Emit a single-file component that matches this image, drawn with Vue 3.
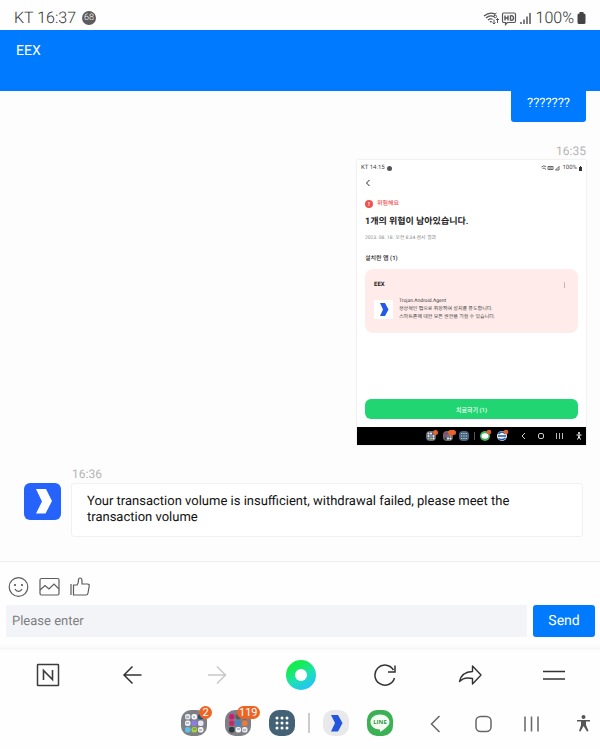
<script setup>
import { ref } from 'vue';

const message = ref('');

const folders = [
  {
    name: 'Apps folder',
    badge: '2',
    dots: ['#dfe6ee', '#f4f4f4', '#24507a', '#eef0f5', '#8d7bea', '#e8e8f4', '#5cc0ea', '#a4d43a', '#f2f2f2']
  },
  {
    name: 'Shopping folder',
    badge: '119',
    dots: ['#d81b72', '#5a5f66', '#4a5a68', '#d4286c', '#3f86cf', '#ee7a34', '#2c3a44', '#f4f4f4', '#e9e9ee']
  }
];

const dotX = (i) => 4 + (i % 3) * 6.5;
const dotY = (i) => 4 + Math.floor(i / 3) * 6.5;

const send = () => {
  message.value = '';
};
</script>

<template>
  <div class="screen">
    <div class="status-bar">
      <div class="status-group">
        <span>KT 16:37</span>
        <span class="status-count">68</span>
      </div>
      <div class="status-group status-right">
        <svg width="50" height="16" viewBox="0 0 50 16" fill="none" stroke="#555">
          <path d="M1 6 Q6.500 1.500 12 4 M3 8 Q7 4.500 11 6.800 M5 10 Q7.500 8 9.500 9.300" stroke-width="1.300" />
          <path d="M6.500 11 L8 13 L9 11 Z" fill="#555" stroke="none" />
          <path d="M13.500 3 Q11 4 11 6.500 M11 6.500 a1.300 1.300 0 1 0 2.600 0 a1.300 1.300 0 1 0 -2.600 0" />
          <path d="M11 9.500 V14 M9.500 12.500 L11 14 L12.500 12.500 M14.500 13 V8.500 M13 10 L14.500 8.500 L16 10" />
          <path d="M20.500 3 H31 Q32.500 3 32.500 4.500 V11 Q32.500 12.500 31 12.500 H24.500 L22.500 14.500 V12.500 H20.500 Q19.500 12.500 19.500 11 V4.500 Q19.500 3 20.500 3 Z" stroke-width="1.200" />
          <path d="M22 5.500 V10.500 M25 5.500 V10.500 M22 8 H25 M27.500 5.500 V10.500 M27.500 5.600 H28.500 Q30.500 5.800 30.500 8 Q30.500 10.300 28.500 10.400 H27.500" stroke-width="1.400" />
          <path d="M38 12 V14 M41 9.500 V14 M44 6.500 V14 M47 3 V14" stroke-width="1.500" />
        </svg>
        <span>100%</span>
        <svg width="9" height="14" viewBox="0 0 9 14">
          <path d="M2.500 1 H6.500 V2.500 H7 Q8.500 2.500 8.500 4 V11.500 Q8.500 13 7 13 H2 Q0.500 13 0.500 11.500 V4 Q0.500 2.500 2 2.500 H2.500 Z" fill="#444" />
        </svg>
      </div>
    </div>

    <header class="header">EEX</header>

    <main class="chat">
      <div class="sent-bubble">???????</div>
      <time class="time time-sent">16:35</time>

      <section class="shot">
        <div class="shot-status">
          <span class="shot-carrier">KT 14:15 <i class="shot-count"></i></span>
          <span class="shot-carrier">
            <svg width="19" height="6" viewBox="0 0 19 6" fill="none" stroke="#666">
              <path d="M0.500 2 Q2.500 0 5 1.500 M1.500 3.500 Q3 2 5 4.500 M7 1.500 H12 V4.500 H7 Z M8 3 H11 M14.500 5 L18 1.500 V5 Z" />
            </svg>
            100%
            <svg width="3" height="5" viewBox="0 0 3 5"><path d="M1 0 H2 V1 H3 V5 H0 V1 H1 Z" fill="#333" /></svg>
          </span>
        </div>
        <div class="shot-body">
          <svg class="shot-back" width="6" height="8" viewBox="0 0 6 8" fill="none" stroke="#222">
            <path d="M4.500 1 L1.500 4 L4.500 7" />
          </svg>
          <div class="risk">
            <svg width="8" height="8" viewBox="0 0 8 8">
              <circle cx="4" cy="4" r="4" fill="#ef5350" />
              <path d="M4 2 V4.500 M4 5.300 V6" stroke="#fff" />
            </svg>
            위험해요
          </div>
          <h2 class="shot-title">1개의 위협이 남아있습니다.</h2>
          <p class="shot-date">2023. 08. 18. 오전 8:34 검사 결과</p>
          <h3 class="shot-section">설치한 앱 (1)</h3>
          <div class="threat">
            <div class="threat-head">
              <span>EEX</span>
              <svg width="3" height="6" viewBox="0 0 3 6" fill="#777">
                <circle cx="1.500" cy="1" r="0.600" /><circle cx="1.500" cy="3" r="0.600" /><circle cx="1.500" cy="5" r="0.600" />
              </svg>
            </div>
            <div class="threat-row">
              <svg width="19" height="19" viewBox="0 0 19 19">
                <rect width="19" height="19" fill="#fff" />
                <path d="M6 3 H11 L14.500 9.500 L11 16 H6 L9 9.500 Z" fill="#2759e8" />
              </svg>
              <p class="threat-text">Trojan.Android.Agent<br />정상적인 앱으로 위장하여 설치를 유도합니다.<br />스마트폰에 대한 모든 권한을 가질 수 있습니다.</p>
            </div>
          </div>
          <button class="heal-button" type="button">치료하기 (1)</button>
        </div>
        <svg class="shot-nav" viewBox="0 0 229 18" fill="none">
          <rect width="229" height="18" fill="#000" />
          <g v-for="(folder, f) in folders" :key="folder.name">
            <rect :x="69 + f * 17" y="4" width="10" height="10" rx="4" fill="#666a72" />
            <circle
              v-for="(dot, i) in folder.dots"
              :key="i"
              :cx="71.5 + f * 17 + (i % 3) * 2.5"
              :cy="6.5 + Math.floor(i / 3) * 2.5"
              r="1"
              :fill="dot"
            />
          </g>
          <rect x="76" y="3" width="5" height="5" rx="2.500" fill="#e8632c" />
          <rect x="91" y="3" width="8" height="5" rx="2.500" fill="#e8632c" />
          <rect x="102" y="4" width="10" height="10" rx="4" fill="#48657b" />
          <path d="M104 6.500 H110 M104 9 H110 M104 11.500 H110" stroke="#b9cbd8" stroke-dasharray="1.300 1" />
          <path d="M117.500 5 V13" stroke="#555" />
          <circle cx="128" cy="9" r="5" fill="#45b45c" />
          <ellipse cx="128" cy="9" rx="3.500" ry="2.700" fill="#fff" />
          <circle cx="145" cy="9" r="5" fill="#f2f5fa" />
          <path d="M141.500 7 Q145 3 148.500 7 M141 9 H149 M141.500 11.500 Q145 14 148.500 11" stroke="#2257a8" stroke-width="1.500" />
          <circle cx="132" cy="5" r="2.300" fill="#e8632c" />
          <circle cx="149" cy="5" r="2.300" fill="#e8632c" />
          <path d="M168 6 L165 9 L168 12" stroke="#ccc" />
          <rect x="181.500" y="6.500" width="5" height="5" rx="1.500" stroke="#ccc" />
          <path d="M199.500 6 V12 M202.500 6 V12 M205.500 6 V12" stroke="#bbb" />
          <circle cx="222" cy="6" r="1" fill="#fff" />
          <path d="M219.500 8 H224.500 M222 8 V10 M222 9.500 L220.500 12.500 M222 9.500 L223.500 12.500" stroke="#fff" />
        </svg>
      </section>

      <time class="time time-received">16:36</time>
      <div class="received">
        <svg class="avatar" width="37" height="37" viewBox="0 0 37 37">
          <rect width="37" height="37" rx="6" fill="#2563fb" />
          <path d="M12 6 H22 L28 18 L21.500 30.500 H12 L18 18.500 Z" fill="#fff" />
        </svg>
        <p class="received-bubble">Your transaction volume is insufficient, withdrawal failed, please meet the transaction volume</p>
      </div>
    </main>

    <form class="composer" @submit.prevent="send">
      <div class="tools">
        <button type="button" class="icon-button" aria-label="Emoji">
          <svg width="21" height="20" viewBox="0 0 21 20" fill="none" stroke="#5c5c5c" stroke-width="1.200">
            <circle cx="10.500" cy="10" r="9.300" />
            <path d="M7 12 Q8 14.300 10.500 14.300 Q13 14.300 14 12" />
            <circle cx="7" cy="8" r="0.500" fill="#5c5c5c" /><circle cx="14" cy="8" r="0.500" fill="#5c5c5c" />
          </svg>
        </button>
        <button type="button" class="icon-button" aria-label="Picture">
          <svg width="21" height="20" viewBox="0 0 21 20" fill="none" stroke="#5c5c5c" stroke-width="1.200">
            <rect x="1" y="1.500" width="19" height="16.500" rx="1.500" />
            <path d="M1 13 L6 8.500 L10 12 L15 7 L20 12" />
          </svg>
        </button>
        <button type="button" class="icon-button" aria-label="Like">
          <svg width="21" height="20" viewBox="0 0 21 20" fill="none" stroke="#5c5c5c" stroke-width="1.200">
            <path d="M1 7 V18 M3.500 8 H7 Q8.500 6.500 8.500 3 Q8.500 1 10 1 Q12 1 12 4 V7 H17.500 Q19.500 7 19.200 9 L18 16 Q17.700 18 16 18 H3.500 Z" />
          </svg>
        </button>
      </div>
      <div class="entry">
        <input v-model="message" class="entry-input" type="text" placeholder="Please enter" aria-label="Please enter" />
        <button class="send-button" type="submit">Send</button>
      </div>
    </form>

    <nav class="browser-bar">
      <button type="button" class="icon-button" aria-label="Home">
        <svg width="24" height="24" viewBox="0 0 24 24" fill="none" stroke="#3c3c40" stroke-width="1.500">
          <rect x="1.500" y="1.500" width="21" height="21" rx="0.500" />
          <path d="M7.500 17 V7.500 L16.500 16.500 V7" stroke-width="1.600" />
        </svg>
      </button>
      <button type="button" class="icon-button" aria-label="Back">
        <svg width="24" height="24" viewBox="0 0 24 24" fill="none" stroke="#333" stroke-width="1.500">
          <path d="M21.500 12 H3.500 M12.500 3.500 L4 12 L12.500 20.500" />
        </svg>
      </button>
      <button type="button" class="icon-button" aria-label="Forward">
        <svg width="24" height="24" viewBox="0 0 24 24" fill="none" stroke="#c8c8c8" stroke-width="1.500">
          <path d="M3 12 H21 M12 3.500 L20.500 12 L12 20.500" />
        </svg>
      </button>
      <button type="button" class="icon-button" aria-label="Green dot">
        <span class="green-dot"></span>
      </button>
      <button type="button" class="icon-button" aria-label="Reload">
        <svg width="24" height="24" viewBox="0 0 24 24" fill="none" stroke="#333" stroke-width="1.500">
          <path d="M21.500 15 A10 10 0 1 1 20.500 7 M22 2.500 V9 H15" />
        </svg>
      </button>
      <button type="button" class="icon-button" aria-label="Share">
        <svg width="24" height="24" viewBox="0 0 24 24" fill="none" stroke="#333" stroke-width="1.400" stroke-linejoin="round">
          <path d="M14.500 3 L23 12 L14.500 21 V15.500 Q6 13.500 1.500 18.500 Q3.500 9 14.500 8.500 Z" />
        </svg>
      </button>
      <button type="button" class="icon-button" aria-label="Menu">
        <svg width="24" height="24" viewBox="0 0 24 24" fill="none" stroke="#333" stroke-width="1.500">
          <path d="M1 8.500 H23 M1 16 H23" />
        </svg>
      </button>
    </nav>

    <nav class="system-bar">
      <div class="dock">
        <button v-for="folder in folders" :key="folder.name" type="button" class="icon-button folder" :aria-label="folder.name">
          <svg width="26" height="26" viewBox="0 0 26 26">
            <rect width="26" height="26" rx="10" fill="#7d7f85" />
            <g transform="translate(3 3)">
              <rect
                v-for="(dot, i) in folder.dots"
                :key="i"
                :x="dotX(i) - 3"
                :y="dotY(i) - 3"
                width="5.500"
                height="5.500"
                rx="2"
                :fill="dot"
              />
              <path d="M2 4 H5 M9 4 H11 M2 10 H5 M9 16 H12 M15 17 H18" stroke="#3b4b77" opacity="0.600" />
            </g>
          </svg>
          <span class="badge">{{ folder.badge }}</span>
        </button>
        <button type="button" class="icon-button" aria-label="All apps">
          <svg width="26" height="26" viewBox="0 0 26 26">
            <rect width="26" height="26" rx="10" fill="#446275" />
            <circle v-for="i in 9" :key="i" :cx="8 + ((i - 1) % 3) * 5" :cy="8 + Math.floor((i - 1) / 3) * 5" r="1.500" fill="#fff" />
          </svg>
        </button>
      </div>
      <span class="divider"></span>
      <div class="dock">
        <button type="button" class="icon-button" aria-label="EEX">
          <svg width="26" height="26" viewBox="0 0 26 26">
            <rect width="26" height="26" rx="10" fill="#e9e9ec" />
            <path d="M8 5 H15 L19.500 13 L15 21.500 H8 L12 13 Z" fill="#2356dd" />
          </svg>
        </button>
        <button type="button" class="icon-button" aria-label="Messenger">
          <svg width="26" height="26" viewBox="0 0 26 26">
            <rect width="26" height="26" rx="10" fill="#3cb054" />
            <path d="M13 4.500 C18.500 4.500 22.500 8 22.500 12 C22.500 16 17 19.500 13 22 V19.500 C7.500 19.500 3.500 16 3.500 12 C3.500 8 7.500 4.500 13 4.500 Z" fill="#f4fff4" />
            <text x="13" y="14" text-anchor="middle" class="line-label">LINE</text>
          </svg>
        </button>
      </div>
      <div class="keys">
        <button type="button" class="icon-button" aria-label="System back">
          <svg width="26" height="26" viewBox="0 0 26 26" fill="none" stroke="#666" stroke-width="1.500">
            <path d="M17.500 6 L9.500 14 L17.500 22" />
          </svg>
        </button>
        <button type="button" class="icon-button" aria-label="System home">
          <svg width="26" height="26" viewBox="0 0 26 26" fill="none" stroke="#666" stroke-width="1.500">
            <rect x="6" y="6.500" width="15" height="15" rx="4.500" />
          </svg>
        </button>
        <button type="button" class="icon-button" aria-label="Recent apps">
          <svg width="26" height="26" viewBox="0 0 26 26" fill="none" stroke="#666" stroke-width="1.500">
            <path d="M7 6.500 V21.500 M13.500 6.500 V21.500 M20 6.500 V21.500" />
          </svg>
        </button>
      </div>
      <button type="button" class="icon-button accessibility" aria-label="Accessibility">
        <svg width="26" height="26" viewBox="0 0 26 26" fill="#555">
          <circle cx="13.500" cy="7" r="2" />
          <path d="M7 10 H20 V11.500 H16 V15 L18.500 21 L17 21.500 L13.500 16 L10.500 21.500 L9 21 L11 15 V11.500 H7 Z" />
        </svg>
      </button>
    </nav>
  </div>
</template>

<style>
body {
  margin: 0;
}
</style>

<style scoped>
* {
  box-sizing: border-box;
}

.screen {
  min-height: 100vh;
  display: flex;
  flex-direction: column;
  background: #fefefe;
  font-family: Roboto, 'Noto Sans CJK KR', sans-serif;
  text-rendering: geometricPrecision;
}

svg {
  display: block;
  flex: none;
}

p,
h2,
h3 {
  margin: 0;
}

.icon-button {
  display: flex;
  padding: 0;
  border: none;
  background: none;
  cursor: pointer;
}

.status-bar {
  display: flex;
  justify-content: space-between;
  padding: 6px 14px 0;
  height: 30px;
  font-size: 16px;
  line-height: 24px;
  font-weight: 300;
  color: #333;
}

.status-group {
  display: flex;
  align-items: center;
  gap: 6px;
}

.status-right {
  gap: 3px;
}

.status-count {
  width: 14px;
  height: 14px;
  border-radius: 50%;
  background: #5c5c5c;
  color: #fff;
  font-size: 9px;
  line-height: 14px;
  text-align: center;
}

.header {
  height: 61px;
  padding: 12px 16px;
  background: #007aff;
  color: #fff;
  font-size: 14px;
  line-height: 18px;
}

.chat {
  flex: 1;
  display: flex;
  flex-direction: column;
  align-items: flex-start;
  padding: 0 14px 24px 24px;
  background: #fdfdfd;
  border-bottom: 1px solid #ececec;
}

.sent-bubble {
  align-self: flex-end;
  padding: 4px 16px 9px;
  border-radius: 0 0 3px 3px;
  background: #007aff;
  color: #fff;
  font-size: 13px;
  line-height: 18px;
}

.time {
  font-size: 12px;
  line-height: 18px;
  color: #b4b4b4;
}

.time-sent {
  align-self: flex-end;
  margin-top: 20px;
}

.time-received {
  margin: 20px 0 0 48px;
}

.shot {
  align-self: flex-end;
  width: 40%;
  min-width: 229px;
  max-width: 229px;
  background: #fff;
  box-shadow: 0 0 2px #ddd;
  font-size: 5px;
  line-height: 8px;
  color: #444;
}

.shot-status {
  display: flex;
  justify-content: space-between;
  padding: 4px 4px 0;
  font-size: 6px;
}

.shot-carrier {
  display: flex;
  align-items: center;
  gap: 2px;
}

.shot-count {
  width: 5px;
  height: 5px;
  border-radius: 50%;
  background: #555;
}

.shot-body {
  display: flex;
  flex-direction: column;
  padding: 7px 8px 8px;
}

.risk {
  display: flex;
  align-items: center;
  gap: 4px;
  margin-top: 13px;
  font-size: 6px;
  font-weight: 500;
  color: #ef5350;
}

.shot-title {
  margin-top: 8px;
  font-size: 9px;
  line-height: 12px;
  color: #222;
}

.shot-date {
  margin-top: 6px;
  color: #888;
}

.shot-section {
  margin-top: 13px;
  font-size: 6px;
  font-weight: 500;
  color: #222;
}

.threat {
  margin-top: 6px;
  padding: 12px 9px;
  border-radius: 8px;
  background: #ffebea;
}

.threat-head {
  display: flex;
  justify-content: space-between;
  align-items: center;
  padding-right: 3px;
  font-size: 6px;
  font-weight: 700;
  color: #222;
}

.threat-row {
  display: flex;
  align-items: center;
  gap: 6px;
  margin-top: 8px;
}

.heal-button {
  height: 20px;
  margin-top: 66px;
  border: none;
  border-radius: 6px;
  background: #20d572;
  color: #fff;
  font-family: inherit;
  font-size: 6px;
  font-weight: 500;
}

.shot-nav {
  width: 100%;
}

.received {
  display: flex;
  align-items: flex-start;
  align-self: stretch;
  gap: 10px;
}

.received-bubble {
  flex: 1;
  margin-right: 3px;
  padding: 10px 48px 10px 15px;
  border: 1px solid #f1f1f1;
  border-radius: 3px;
  background: #fff;
  color: #111;
  font-size: 13px;
  line-height: 16px;
}

.composer {
  padding: 15px 5px 7px 6px;
}

.tools {
  display: flex;
  gap: 10px;
  padding: 0 2px;
}

.entry {
  display: flex;
  gap: 6px;
  margin-top: 8px;
}

.entry-input {
  flex: 1;
  min-width: 0;
  height: 32px;
  padding: 0 6px;
  border: none;
  background: #f3f4f8;
  font-family: inherit;
  font-size: 13px;
  color: #222;
  text-rendering: inherit;
}

.entry-input::placeholder {
  color: #808080;
}

.send-button {
  width: 62px;
  height: 32px;
  border: none;
  border-radius: 3px;
  background: #007aff;
  color: #fff;
  font-family: inherit;
  font-size: 14px;
  text-rendering: inherit;
}

.browser-bar {
  display: flex;
  align-items: center;
  height: 58px;
  padding: 4px 4px 0 6px;
  background: linear-gradient(#fefefe, #f7f7f7 5px, #fefefe 6px);
}

.browser-bar .icon-button {
  flex: 1;
  justify-content: center;
}

.green-dot {
  width: 30px;
  height: 30px;
  border: 9px solid transparent;
  border-radius: 50%;
  background:
    linear-gradient(#fff, #fff) padding-box,
    linear-gradient(150deg, #14ec50 25%, #1de0b4 55%, #25c4f4 85%) border-box;
}

.system-bar {
  display: flex;
  justify-content: flex-end;
  align-items: center;
  height: 47px;
  padding: 0 4px 5px;
}

.dock {
  display: flex;
  gap: 18px;
}

.divider {
  width: 2px;
  height: 20px;
  margin: 0 13px;
  background: #ccc;
}

.folder {
  position: relative;
}

.badge {
  position: absolute;
  left: 18px;
  top: -4px;
  min-width: 13px;
  padding: 0 2px;
  border-radius: 7px;
  background: #ed6424;
  color: #fff;
  font-family: Roboto, sans-serif;
  font-size: 11px;
  line-height: 13px;
}

.folder + .folder .badge {
  left: 12px;
}

.line-label {
  font-family: 'Open Sans', sans-serif;
  font-size: 6px;
  font-weight: 700;
  fill: #2f9a46;
}

.keys {
  display: flex;
  gap: 22px;
  margin: 0 26px 0 29px;
}
</style>
